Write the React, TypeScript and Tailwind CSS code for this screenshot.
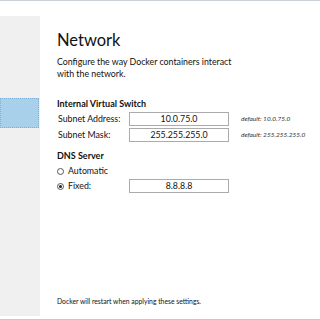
export default function App() {
  const font = { fontFamily: 'Lato, "Open Sans", sans-serif' };
  return (
    <div className="w-[320px] h-[320px] bg-white flex flex-col overflow-hidden text-[#111]" style={font}>
      <div className="h-px bg-[#cdd2d8]" />
      <div className="flex flex-1 min-h-0">
        <div className="w-[40px] flex flex-col pt-[15px] pb-[3px]">
          <div className="flex-1 bg-[#f0f0f0] pt-[82px]">
            <div className="h-[30px] w-[39px] bg-[#a8d0ea] border border-dotted border-[#7fb0d6]" />
          </div>
        </div>
        <div className="flex-1 flex flex-col pl-[17px] pb-[13px]">
          <div className="mt-[29px] text-[16.5px] leading-[20px]">Network</div>
          <div className="mt-[6px] text-[8.8px] leading-[12px] w-[190px]">
            Configure the way Docker containers interact with the network.
          </div>
          <div className="mt-[18px] text-[9px] leading-[12px] font-bold">Internal Virtual Switch</div>
          <div className="mt-[1px] flex items-center text-[8.8px] h-[16px]">
            <span className="w-[72px] pl-[1px] whitespace-nowrap">Subnet Address:</span>
            <div className="w-[100px] h-[14px] border border-[#ababab] flex items-center justify-center leading-none">10.0.75.0</div>
            <span className="ml-[12px] text-[6.5px] italic text-[#333] whitespace-nowrap">default: 10.0.75.0</span>
          </div>
          <div className="flex items-center text-[8.8px] h-[16px]">
            <span className="w-[72px] pl-[1px] whitespace-nowrap">Subnet Mask:</span>
            <div className="w-[100px] h-[14px] border border-[#ababab] flex items-center justify-center leading-none">255.255.255.0</div>
            <span className="ml-[12px] text-[6.5px] italic text-[#333] whitespace-nowrap">default: 255.255.255.0</span>
          </div>
          <div className="mt-[7px] text-[9px] leading-[12px] font-bold">DNS Server</div>
          <div className="mt-[2px] flex items-center text-[8.8px] h-[14px]">
            <span className="w-[7px] h-[7px] rounded-full border border-[#555] mr-[4px]" />
            <span>Automatic</span>
          </div>
          <div className="flex items-center text-[8.8px] h-[16px]">
            <span className="w-[72px] flex items-center">
              <span className="w-[7px] h-[7px] rounded-full border border-[#555] mr-[4px] flex items-center justify-center">
                <span className="w-[3px] h-[3px] rounded-full bg-[#222]" />
              </span>
              <span>Fixed:</span>
            </span>
            <div className="w-[100px] h-[14px] border border-[#ababab] flex items-center justify-center leading-none">8.8.8.8</div>
          </div>
          <div className="mt-auto text-[6.8px] leading-[10px] whitespace-nowrap">Docker will restart when applying these settings.</div>
        </div>
      </div>
      <div className="h-px bg-[#c8c8c8]" />
    </div>
  );
}
